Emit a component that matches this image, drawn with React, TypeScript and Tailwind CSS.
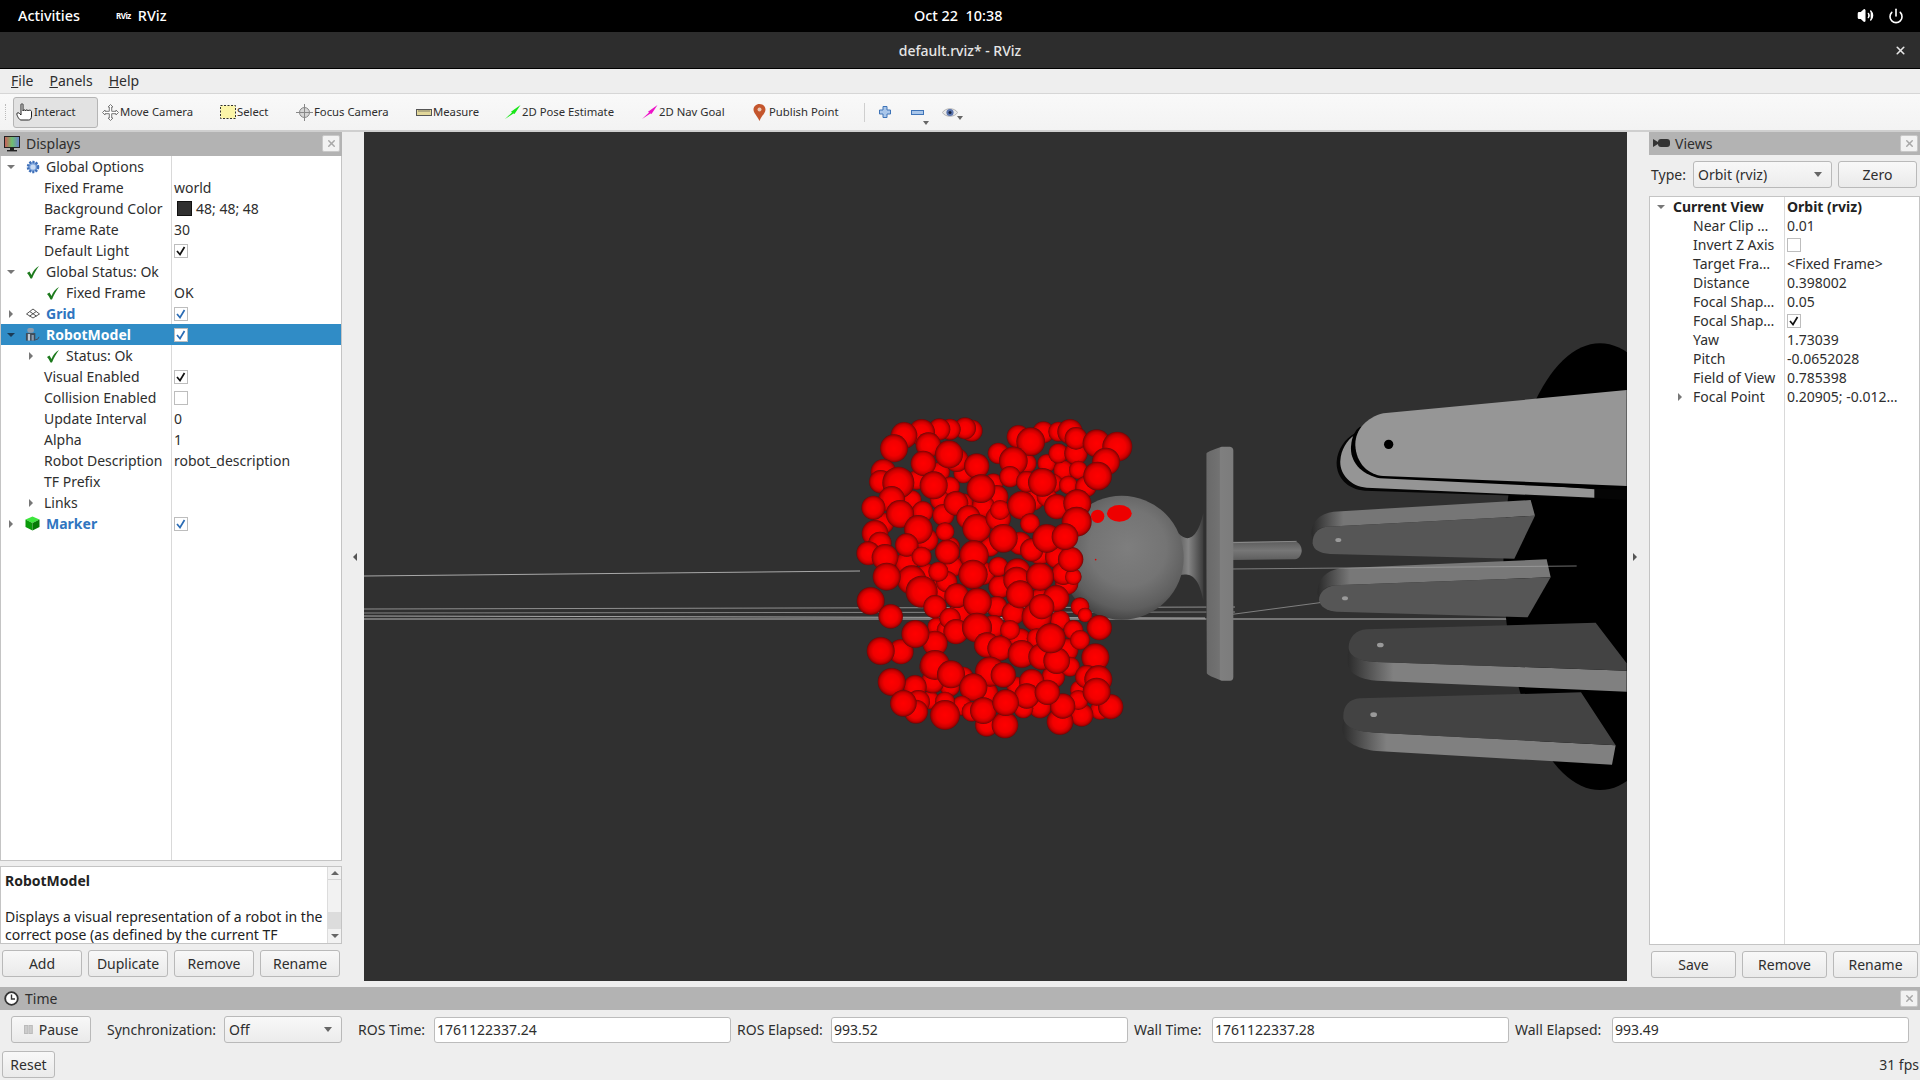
import React from "react";
import { Volume2, Power, X } from "lucide-react";

const S: [number, number, number][] = [
[230,240,30],[300,215,30],[370,220,30],[330,260,30],[460,250,30],[470,290,35],[370,310,30],[430,320,35],[330,440,30],[300,300,30],[260,420,35],[130,370,32],[215,300,30],[560,190,30],[620,190,28],[670,210,30],[640,250,28],[580,300,32],[620,290,30],[540,430,35],[600,460,35],[650,470,35],[450,440,30],[430,520,35],[480,560,35],[380,490,30],[340,500,30],[260,520,30],[200,490,35],[300,570,35],[360,640,35],[470,620,32],[520,640,35],[540,720,35],[600,600,35],[680,550,35],[670,520,35],[700,530,25],[460,680,35],[510,690,30],[290,680,28],[320,690,30],[660,660,30],[700,690,30],[680,750,35],[640,830,35],[690,800,30],[330,860,30],[370,830,30],[440,880,35],[530,860,30],[600,920,35],[720,870,30],[550,925,30],[270,900,28],
[395,92,33],[375,85,33],[330,88,32],[298,88,33],[245,97,40],[192,106,40],[265,135,38],[250,190,38],[350,180,36],[162,145,42],[327,163,42],[410,198,38],[130,215,38],[122,245,35],[175,248,48],[281,256,42],[423,266,43],[155,298,40],[100,323,36],[248,335,32],[310,345,33],[180,342,42],[315,395,28],[348,310,37],[385,352,36],[235,388,43],[410,385,43],[105,400,40],[120,430,35],[85,460,36],[200,435,35],[135,472,40],[245,470,30],[322,456,37],[402,465,44],[475,355,38],[480,330,30],[490,415,43],[545,316,43],
[475,160,32],[535,110,35],[610,97,33],[572,125,43],[520,183,43],[655,95,30],[690,95,38],[655,160,30],[708,160,35],[708,115,34],[770,130,42],[832,140,45],[715,210,28],[685,255,28],[738,260,32],[798,185,42],[773,228,43],[510,230,32],[560,245,32],[607,247,43],
[570,370,30],[575,450,35],[692,478,38],[650,320,38],[712,310,42],[710,365,45],[620,415,43],[675,410,40],[475,500,30],[320,545,32],[295,515,30],[532,515,40],[530,540,40],[600,530,42],[399,523,44],[215,540,44],[140,530,42],[245,575,48],[285,620,35],[350,587,37],[412,607,43],[330,655,32],[348,695,38],[411,683,45],[590,650,45],[540,583,42],[648,595,40],[605,620,38],
[92,603,42],[152,649,37],[183,755,38],[285,730,38],[226,702,42],[122,753,42],[720,620,28],[735,645,22],[590,715,30],[720,720,30],[778,683,38],[440,735,38],[480,745,38],[545,762,42],[605,770,40],[650,782,40],[632,715,45],[766,772,42],
[270,800,32],[278,845,35],[285,795,45],[333,823,42],[225,860,35],[155,846,42],[575,845,38],[450,815,45],[490,825,38],[400,862,42],[740,830,35],[775,838,42],[780,930,30],[812,920,38],[725,945,35],[715,900,30],[660,965,40],[668,918,38],[560,888,38],[622,877,38],[770,875,42],[440,975,35],[495,975,40],[365,917,30],[395,935,30],[430,932,40],[497,908,40],[315,905,30],[315,945,45],[235,905,35],[228,935,36],[190,910,40],
];

function Scene() {
  return (
    <svg viewBox="364 132 1263 849" className="w-full h-full block">
      <defs>
        <radialGradient id="red" cx="50%" cy="50%" r="50%">
          <stop offset="0%" stopColor="#ff0000" />
          <stop offset="55%" stopColor="#f20000" />
          <stop offset="80%" stopColor="#cc0000" />
          <stop offset="93%" stopColor="#9c0000" />
          <stop offset="100%" stopColor="#5c0c0c" />
        </radialGradient>
        <radialGradient id="ball" cx="55%" cy="42%" r="62%">
          <stop offset="0%" stopColor="#7e7e7e" />
          <stop offset="50%" stopColor="#747474" />
          <stop offset="80%" stopColor="#5e5e5e" />
          <stop offset="100%" stopColor="#3c3c3c" />
        </radialGradient>
        <linearGradient id="flange" x1="0" x2="1" y1="0" y2="0">
          <stop offset="0%" stopColor="#2a2a2a" />
          <stop offset="7%" stopColor="#6a6a6a" />
          <stop offset="50%" stopColor="#727272" />
          <stop offset="54%" stopColor="#7f7f7f" />
          <stop offset="100%" stopColor="#7c7c7c" />
        </linearGradient>
        <linearGradient id="neck" x1="0" x2="1" y1="0" y2="0">
          <stop offset="0%" stopColor="#5e5e5e" />
          <stop offset="40%" stopColor="#858585" />
          <stop offset="100%" stopColor="#3c3c3c" />
        </linearGradient>
        <linearGradient id="shaft" x1="0" x2="0" y1="0" y2="1">
          <stop offset="0%" stopColor="#5c5c5c" />
          <stop offset="50%" stopColor="#777777" />
          <stop offset="100%" stopColor="#5e5e5e" />
        </linearGradient>
        <linearGradient id="side" gradientUnits="userSpaceOnUse" x1="395" x2="490" y1="0" y2="0">
          <stop offset="0%" stopColor="#2a2a2a" />
          <stop offset="100%" stopColor="#767676" />
        </linearGradient>
        <linearGradient id="side2" gradientUnits="userSpaceOnUse" x1="412" x2="510" y1="0" y2="0">
          <stop offset="0%" stopColor="#2a2a2a" />
          <stop offset="100%" stopColor="#787878" />
        </linearGradient>
        <linearGradient id="side3" gradientUnits="userSpaceOnUse" x1="503" x2="640" y1="0" y2="0">
          <stop offset="0%" stopColor="#2c2c2c" />
          <stop offset="100%" stopColor="#808080" />
        </linearGradient>
        <linearGradient id="side4" gradientUnits="userSpaceOnUse" x1="487" x2="620" y1="0" y2="0">
          <stop offset="0%" stopColor="#2c2c2c" />
          <stop offset="100%" stopColor="#808080" />
        </linearGradient>
      </defs>
      <g stroke="#a8a8a8" strokeWidth="1" fill="none">
        <path d="M364 576 L860 571" />
        <path d="M364 609 L1235 607" strokeOpacity=".8" />
        <path d="M364 613 L1235 612" strokeOpacity=".7" />
        <path d="M364 616 L1205 618" />
        <path d="M364 619 L1235 619" stroke="#b8b8b8" />
        <path d="M1235 619 L1510 619" stroke="#b8b8b8" />
      </g>
      <g transform="translate(1180 330) scale(0.33333)">
        <ellipse cx="1260" cy="710" rx="290" ry="670" fill="#000" />
        <path d="M1245 505 L555 482 C500 478 468 440 470 395 C472 360 495 325 525 310 L1340 300 L1340 510 Z" fill="#050505" />
        <path d="M1243 503 L560 473 C510 470 478 430 481 392 C483 360 500 330 525 315 L600 430 L1243 478 Z" fill="#959595" />
        <path d="M1340 480 L600 445 C550 435 510 400 513 350 C515 320 525 300 540 290 L1340 300Z" fill="#000" />
        <path d="M1340 180 L610 250 C560 262 525 300 526 345 C528 400 565 435 610 438 L1340 468 Z" fill="#969696" />
        <circle cx="626" cy="343" r="14" fill="#000" />
        <path d="M1052 510 L460 545 C420 550 395 575 394 610 L398 632 C400 605 415 592 440 590 L1065 557 Z" fill="url(#side)" />
        <path d="M1065 557 L440 590 C410 595 397 615 398 640 C400 660 420 670 450 672 L1003 686 Z" fill="#565656" />
        <ellipse cx="475" cy="630" rx="9" ry="6" fill="#9a9a9a" />
        <path d="M1100 688 L480 715 C440 722 413 745 412 790 L417 808 C420 780 440 768 465 766 L1112 742 Z" fill="url(#side2)" />
        <path d="M1112 742 L465 766 C435 770 417 790 417 810 C420 830 440 843 470 845 L1043 862 Z" fill="#565656" />
        <ellipse cx="495" cy="805" rx="9" ry="6" fill="#9a9a9a" />
        <path d="M506 955 C503 970 502 990 504 1005 C510 1035 550 1050 590 1052 L1340 1085 L1340 1022 L590 996 C550 994 512 985 506 955Z" fill="url(#side3)" />
        <path d="M1247 878 L560 898 C525 900 505 925 506 955 C510 985 550 995 590 996 L1340 1022 L1340 1000 Z" fill="#434343" />
        <ellipse cx="601" cy="945" rx="10" ry="7" fill="#9a9a9a" />
        <path d="M490 1165 L487 1200 C492 1240 540 1258 590 1263 L1296 1304 L1307 1246 L590 1208 C540 1206 495 1195 490 1165Z" fill="url(#side4)" />
        <path d="M1203 1087 L540 1105 C505 1108 488 1130 490 1165 C495 1195 540 1208 590 1208 L1307 1246 Z" fill="#434343" />
        <ellipse cx="581" cy="1154" rx="10" ry="7" fill="#9a9a9a" />
        <path d="M157 635 L345 633 C360 640 366 650 365 665 C362 680 355 688 340 688 L157 690 Z" fill="url(#shaft)" />
        <path d="M157 638 L350 634" stroke="#a0a0a0" strokeWidth="2" fill="none" />
        <path d="M157 717 L1190 708" stroke="#a8a8a8" strokeWidth="2" fill="none" />
        <path d="M157 853 L420 818" stroke="#a8a8a8" strokeWidth="2" fill="none" />
        <path d="M76 372 Q80 365 125 350 L150 350 Q160 352 160 362 L160 1040 Q160 1052 150 1052 L125 1052 Q85 1038 80 1030 Z" fill="url(#flange)" />
      </g>
      <g transform="translate(840 400) scale(0.33333)">
        <path d="M1015 400 C1040 425 1070 425 1090 340 L1090 600 C1075 525 1050 520 1020 525Z" fill="url(#neck)" />
        <circle cx="845" cy="473" r="186" fill="url(#ball)" />
        <ellipse cx="773" cy="349" rx="20" ry="20" fill="#ee0000" />
        <ellipse cx="838" cy="340" rx="37" ry="25" fill="#ee0000" />
        <circle cx="767" cy="479" r="2.5" fill="#e00000" />
        {S.map(([x, y, r], i) => (
          <circle key={i} cx={x} cy={y} r={r} fill="url(#red)" />
        ))}
      </g>
    </svg>
  );
}

const Arrow = ({ open, light }: { open?: boolean; light?: boolean }) => (
  <svg width="12" height="12" viewBox="0 0 12 12" className="shrink-0">
    {open ? (
      <path d="M2 4 L10 4 L6 8 Z" fill={light ? "#1b3a55" : "#777"} />
    ) : (
      <path d="M4 2 L8 6 L4 10 Z" fill="#777" />
    )}
  </svg>
);

const OkIcon = () => (
  <svg width="14" height="14" viewBox="0 0 14 14">
    <path d="M1 8 L3.5 6.5 L5.5 10 C7 6 10 2.5 13 1 C10 5 8 8.5 6 13.5 L4.5 13.5 C3.5 11.5 2.5 9.5 1 8 Z" fill="#1d7a1d" />
  </svg>
);
const GearIcon = () => (
  <svg width="14" height="14" viewBox="0 0 14 14">
    <circle cx="7" cy="7" r="5" fill="#7fa6dd" stroke="#3e6fb8" strokeWidth="2.6" strokeDasharray="2 1.2" />
    <circle cx="7" cy="7" r="2.6" fill="#c9dbf3" />
  </svg>
);
const GridIcon = () => (
  <svg width="14" height="14" viewBox="0 0 14 14" fill="none" stroke="#555" strokeWidth="1">
    <path d="M7 2 L13.5 7 L7 11 L.5 7 Z" />
    <path d="M4 4.7 L10.5 9.2 M10 4.7 L3.5 9.2" />
  </svg>
);
const RobotIcon = () => (
  <svg width="16" height="15" viewBox="0 0 16 15">
    <rect x="2.5" y="0.5" width="7" height="5" rx="2" fill="#8d9cad" />
    <rect x="1" y="6" width="10" height="8" fill="#3f4b58" />
    <rect x="3" y="7" width="2.4" height="7" fill="#c2ccd6" />
    <rect x="7" y="8" width="2.4" height="6" fill="#8a9bb0" />
    <path d="M11 13 Q14 13.5 15 10" stroke="#445" fill="none" />
  </svg>
);
const CubeIcon = () => (
  <svg width="15" height="15" viewBox="0 0 15 15">
    <path d="M7.5 0.5 L14.5 3.5 L7.5 7 L.5 3.5 Z" fill="#3ee63e" />
    <path d="M.5 3.5 L7.5 7 L7.5 14.5 L.5 11 Z" fill="#0a9a0a" />
    <path d="M14.5 3.5 L7.5 7 L7.5 14.5 L14.5 11 Z" fill="#067a06" />
  </svg>
);
const Box = ({ mark }: { mark?: "black" | "blue" }) => (
  <div className="w-[14px] h-[14px] bg-white border border-[#bdbdbd] flex items-center justify-center shrink-0">
    {mark && (
      <svg width="10" height="10" viewBox="0 0 10 10" fill="none" stroke={mark === "blue" ? "#2b6cb5" : "#111"} strokeWidth="1.7">
        <path d="M1 5 L4 8.5 L8.5 1" />
      </svg>
    )}
  </div>
);

type Row = {
  label: string; level?: number; arrow?: "open" | "closed"; icon?: React.ReactNode; value?: string;
  check?: "black" | "blue" | "none"; blue?: boolean; sel?: boolean; swatch?: boolean;
};
const displayRows: Row[] = [
  { label: "Global Options", arrow: "open", icon: <GearIcon /> },
  { label: "Fixed Frame", level: 1, value: "world" },
  { label: "Background Color", level: 1, value: "48; 48; 48", swatch: true },
  { label: "Frame Rate", level: 1, value: "30" },
  { label: "Default Light", level: 1, check: "black" },
  { label: "Global Status: Ok", arrow: "open", icon: <OkIcon /> },
  { label: "Fixed Frame", level: 1, icon: <OkIcon />, value: "OK" },
  { label: "Grid", arrow: "closed", icon: <GridIcon />, check: "blue", blue: true },
  { label: "RobotModel", arrow: "open", icon: <RobotIcon />, check: "blue", blue: true, sel: true },
  { label: "Status: Ok", level: 1, arrow: "closed", icon: <OkIcon /> },
  { label: "Visual Enabled", level: 1, check: "black" },
  { label: "Collision Enabled", level: 1, check: "none" },
  { label: "Update Interval", level: 1, value: "0" },
  { label: "Alpha", level: 1, value: "1" },
  { label: "Robot Description", level: 1, value: "robot_description" },
  { label: "TF Prefix", level: 1 },
  { label: "Links", level: 1, arrow: "closed" },
  { label: "Marker", arrow: "closed", icon: <CubeIcon />, check: "blue", blue: true },
];

function DisplayRow({ r }: { r: Row }) {
  const lvl = r.level ?? 0;
  return (
    <div className={"flex h-[21px] items-center " + (r.sel ? "bg-[#308cc6]" : "")}>
      <div className={"w-[170px] shrink-0 flex items-center h-full whitespace-nowrap " + (lvl ? "pl-[24px]" : "pl-[4px]")}>
        <div className="w-[12px] shrink-0 flex justify-center">
          {r.arrow && <Arrow open={r.arrow === "open"} light={r.sel} />}
        </div>
        {r.icon ? (
          <div className="w-[15px] ml-[8px] mr-[6px] shrink-0 flex justify-center">{r.icon}</div>
        ) : (
          <div className="w-[7px] shrink-0" />
        )}
        <span className={r.sel ? "text-white font-bold" : r.blue ? "text-[#2f75c0] font-bold" : "text-[#2e2e2e]"}>
          {r.label}
        </span>
      </div>
      <div className={"flex-1 flex items-center h-full pl-[2px] border-l " + (r.sel ? "border-transparent" : "border-[#d9d9d9]")}>
        {r.check ? <Box mark={r.check === "none" ? undefined : r.check} /> : null}
        {r.swatch && <div className="w-[15px] h-[15px] bg-[#303030] border border-[#111] ml-[3px] mr-[4px]" />}
        {r.value && <span className="text-[#2e2e2e] whitespace-nowrap">{r.value}</span>}
      </div>
    </div>
  );
}

const viewRows: { label: string; value?: string; check?: "black" | "none"; arrow?: boolean }[] = [
  { label: "Near Clip …", value: "0.01" },
  { label: "Invert Z Axis", check: "none" },
  { label: "Target Fra…", value: "<Fixed Frame>" },
  { label: "Distance", value: "0.398002" },
  { label: "Focal Shap…", value: "0.05" },
  { label: "Focal Shap…", check: "black" },
  { label: "Yaw", value: "1.73039" },
  { label: "Pitch", value: "-0.0652028" },
  { label: "Field of View", value: "0.785398" },
  { label: "Focal Point", value: "0.20905; -0.012…", arrow: true },
];

const Btn = ({ children, className = "" }: { children: React.ReactNode; className?: string }) => (
  <div className={"h-[27px] border border-[#b9b9b9] rounded-[3px] bg-gradient-to-b from-[#f8f8f8] to-[#eaeaea] flex items-center justify-center text-[#2e2e2e] " + className}>
    {children}
  </div>
);
const CloseBtn = () => (
  <div className="w-[18px] h-[17px] bg-[#f2f2f2] border border-[#c8c8c8] rounded-[2px] flex items-center justify-center">
    <X size={11} strokeWidth={3.2} className="text-[#a8a8a8]" />
  </div>
);
const Combo = ({ text, className = "" }: { text: string; className?: string }) => (
  <div className={"h-[27px] border border-[#b9b9b9] rounded-[3px] bg-gradient-to-b from-[#f8f8f8] to-[#ececec] flex items-center justify-between pl-[4px] pr-[9px] text-[#2e2e2e] " + className}>
    <span>{text}</span>
    <svg width="8" height="5" viewBox="0 0 8 5"><path d="M0 0 H8 L4 5 Z" fill="#666" /></svg>
  </div>
);
const Field = ({ label, value, labelW }: { label: string; value: string; labelW: string }) => (
  <div className="flex items-center">
    <span className={"whitespace-nowrap text-[#2e2e2e] " + labelW}>{label}</span>
    <div className="h-[26px] w-[297px] bg-white border border-[#bcbcbc] rounded-[3px] flex items-center pl-[2px] text-[#2e2e2e]">{value}</div>
  </div>
);

const tools: { w: string; label: string; icon: React.ReactNode }[] = [
  { w: "w-[117px]", label: "Move Camera", icon: (
    <svg width="17" height="17" viewBox="0 0 17 17" fill="#fff" stroke="#777" strokeWidth="1"><path d="M8.5 .5 L11 3 H9.7 V7.3 H14 V6 L16.5 8.5 L14 11 V9.7 H9.7 V14 H11 L8.5 16.5 L6 14 H7.3 V9.7 H3 V11 L.5 8.5 L3 6 V7.3 H7.3 V3 H6 Z" /></svg>
  ) },
  { w: "w-[77px]", label: "Select", icon: (
    <svg width="16" height="14" viewBox="0 0 16 14"><rect x=".5" y=".5" width="15" height="13" fill="#fbf5a8" stroke="#333" strokeDasharray="2 1.5" /></svg>
  ) },
  { w: "w-[119px]", label: "Focus Camera", icon: (
    <svg width="17" height="17" viewBox="0 0 17 17" fill="none" stroke="#888"><path d="M8.5 0 V17 M0 8.5 H17" /><circle cx="8.5" cy="8.5" r="5" fill="#d5d5d5" /><path d="M8.5 3 V14 M3 8.5 H14" /></svg>
  ) },
  { w: "w-[89px]", label: "Measure", icon: (
    <svg width="16" height="7" viewBox="0 0 16 7"><rect x=".5" y=".5" width="15" height="6" fill="#e2d79a" stroke="#555" /><path d="M3 1 V3 M5 1 V3 M7 1 V3 M9 1 V3 M11 1 V3 M13 1 V3" stroke="#555" strokeWidth=".7" /></svg>
  ) },
  { w: "w-[137px]", label: "2D Pose Estimate", icon: (
    <svg width="16" height="14" viewBox="0 0 16 14"><path d="M0 14 L7 7.5 L6 6.8 L15.5 0 L9.5 9 L8.5 8.5 Z" fill="#19e619" /></svg>
  ) },
  { w: "w-[112px]", label: "2D Nav Goal", icon: (
    <svg width="16" height="14" viewBox="0 0 16 14"><path d="M0 14 L7 7.5 L6 6.8 L15.5 0 L9.5 9 L8.5 8.5 Z" fill="#ee12c8" /></svg>
  ) },
];

export default function App() {
  return (
    <div className="w-[1920px] h-[1080px] overflow-hidden bg-[#eeeeee] flex flex-col text-[14px] font-['Noto_Sans',sans-serif] text-[#2e2e2e]">
      <div className="relative h-[32px] bg-black shrink-0 flex items-center text-white font-medium text-[14.4px] pb-[1px]">
        <span className="ml-[18px]">Activities</span>
        <span className="ml-[36px] text-[8px] font-bold tracking-[-0.5px]">RViz</span>
        <span className="ml-[7px]">RViz</span>
        <span className="absolute left-[914px]">Oct 22&nbsp;&nbsp;10:38</span>
        <div className="ml-auto flex items-center gap-[14px] mr-[16px]">
          <Volume2 size={17} fill="#fff" />
          <Power size={16} strokeWidth={2.4} />
        </div>
      </div>
      <div className="relative h-[37px] bg-[#2d2d2d] border-b border-black shrink-0 flex items-center justify-center text-[#e6e6e6] font-medium">
        default.rviz* - RViz
        <X size={13} strokeWidth={3} className="absolute right-[13px] top-[12px] text-[#e6e6e6]" />
      </div>
      <div className="h-[25px] shrink-0 flex items-center bg-[#eeeeee] pl-[11px] gap-[16px] border-b border-[#d6d6d6] pb-[1px]">
        <span><span className="underline">F</span>ile</span>
        <span><span className="underline">P</span>anels</span>
        <span><span className="underline">H</span>elp</span>
      </div>
      <div className="h-[38px] shrink-0 flex items-center bg-gradient-to-b from-[#f9f9f9] to-[#f3f3f3] border-b-2 border-[#cfcfcf] text-[11.3px] pl-[5px]">
        <div className="w-[3px] h-[16px] border-l border-dotted border-[#bbb] mr-[5px]" />
        <div className="w-[85px] h-[31px] bg-[#e2e2e2] border border-[#b5b5b5] rounded-[3px] flex items-center pl-[2px] mr-[4px]">
          <svg width="17" height="18" viewBox="0 0 17 18" fill="#fff" stroke="#222" strokeWidth="1"><path d="M5 1.5 C5 .6 7 .6 7 1.5 V8 C7 6.5 9.5 6.5 9.5 8 C9.5 6.5 12 6.5 12 8 C12 6.8 15.5 6.8 15.5 8.5 V13 C15.5 15.5 14.5 17 12.5 17 H5 C3 17 1 12.5 .8 11 C.6 9.5 3 9.5 3.5 10.5 L5 12 Z" /></svg>
          <span className="ml-[1px]">Interact</span>
        </div>
        {tools.map((t) => (
          <div key={t.label} className={"flex items-center whitespace-nowrap " + t.w}>
            <div className="w-[17px] flex justify-center shrink-0">{t.icon}</div>
            <span className="ml-[1px]">{t.label}</span>
          </div>
        ))}
        <div className="flex items-center w-[111px] whitespace-nowrap">
          <svg width="13" height="17" viewBox="0 0 13 17">
            <path d="M6.5 0 C10 0 12.5 2.5 12.5 5.7 C12.5 9 8.5 12 6.5 17 C4.5 12 .5 9 .5 5.7 C.5 2.5 3 0 6.5 0 Z" fill="#c4562d" />
            <circle cx="6.5" cy="5.5" r="2" fill="#e8c7b5" />
          </svg>
          <span className="ml-[3px]">Publish Point</span>
        </div>
        <div className="w-px h-[19px] bg-[#cfcfcf]" />
        <svg width="12" height="12" viewBox="0 0 12 12" className="ml-[14px]"><path d="M4 .5 H8 V4 H11.5 V8 H8 V11.5 H4 V8 H.5 V4 H4 Z" fill="#a9c6ea" stroke="#3f74b8" /></svg>
        <div className="relative ml-[20px]">
          <svg width="13" height="5" viewBox="0 0 13 5" className="block"><rect x=".5" y=".5" width="12" height="4" fill="#a9c6ea" stroke="#3f74b8" /></svg>
          <div className="absolute left-[12px] top-[11px] w-0 h-0 border-x-[3px] border-x-transparent border-t-[4px] border-t-[#666]" />
        </div>
        <div className="relative ml-[18px]">
          <svg width="16" height="11" viewBox="0 0 16 11" className="block"><path d="M.5 5.5 C3 .5 13 .5 15.5 5.5 C13 10.5 3 10.5 .5 5.5 Z" fill="#e8e8e8" stroke="#b5b5b5" /><circle cx="8" cy="5.5" r="3.6" fill="#5a74ad" /><circle cx="8" cy="5.5" r="1.5" fill="#17233f" /></svg>
          <div className="absolute left-[15px] top-[9px] w-0 h-0 border-x-[3px] border-x-transparent border-t-[4px] border-t-[#666]" />
        </div>
      </div>

      <div className="h-[849px] shrink-0 flex">
        <div className="w-[342px] shrink-0 flex flex-col">
          <div className="h-[24px] bg-[#b3b3b3] flex items-center pl-[4px] pr-[2px] pb-[1px] shrink-0">
            <svg width="16" height="16" viewBox="0 0 16 16" className="mr-[6px]"><defs><linearGradient id="scr" x1="0" x2="1"><stop offset="0%" stopColor="#d05a5a" /><stop offset="50%" stopColor="#6fbf6f" /><stop offset="100%" stopColor="#6a7fd0" /></linearGradient></defs><rect x=".5" y=".5" width="15" height="11" fill="url(#scr)" stroke="#222" /><rect x="6" y="12" width="4" height="2" fill="#222" /><rect x="3" y="14" width="10" height="1.4" fill="#222" /></svg>
            <span>Displays</span>
            <div className="ml-auto"><CloseBtn /></div>
          </div>
          <div className="h-[705px] shrink-0 bg-white border border-t-0 border-[#c4c4c4] relative">
            {displayRows.map((r, i) => <DisplayRow key={i} r={r} />)}
            <div className="absolute left-[170px] top-[378px] bottom-0 w-px bg-[#d9d9d9]" />
          </div>
          <div className="h-[5px] shrink-0" />
          <div className="h-[78px] shrink-0 bg-white border border-[#c4c4c4] flex overflow-hidden">
            <div className="flex-1 pl-[4px] pt-[5px] leading-[18px] text-[#222] whitespace-nowrap">
              <div className="font-bold">RobotModel</div>
              <div className="h-[18px]" />
              <div>Displays a visual representation of a robot in the</div>
              <div>correct pose (as defined by the current TF</div>
            </div>
            <div className="w-[14px] bg-[#f2f2f2] border-l border-[#dcdcdc] flex flex-col">
              <div className="h-[13px] flex items-center justify-center border-b border-[#d5d5d5]"><div className="w-0 h-0 border-x-[4px] border-x-transparent border-b-[4px] border-b-[#666]" /></div>
              <div className="h-[32px]" />
              <div className="h-[17px] bg-[#dcdcdc]" />
              <div className="flex-1 flex items-center justify-center"><div className="w-0 h-0 border-x-[4px] border-x-transparent border-t-[4px] border-t-[#666]" /></div>
            </div>
          </div>
          <div className="flex gap-[6px] px-[2px] pt-[6px]">
            {["Add", "Duplicate", "Remove", "Rename"].map((b) => <Btn key={b} className="w-[80px]">{b}</Btn>)}
          </div>
        </div>
        <div className="w-[22px] shrink-0 flex items-center justify-center pl-[3px]">
          <div className="w-0 h-0 border-y-[4px] border-y-transparent border-r-[4px] border-r-[#555]" />
        </div>
        <div className="w-[1263px] shrink-0 bg-[#303030] overflow-hidden"><Scene /></div>
        <div className="w-[22px] shrink-0 flex items-center justify-center pr-[6px]">
          <div className="w-0 h-0 border-y-[4px] border-y-transparent border-l-[4px] border-l-[#555]" />
        </div>
        <div className="w-[271px] shrink-0 flex flex-col">
          <div className="h-[23px] bg-[#b3b3b3] flex items-center pl-[4px] pr-[2px] pb-[1px] shrink-0">
            <svg width="17" height="10" viewBox="0 0 17 10" className="mr-[5px]"><path d="M0 1 L5 4 V6 L0 9 Z" fill="#333" /><rect x="5" y="1" width="12" height="8" rx="3" fill="#333" /></svg>
            <span>Views</span>
            <div className="ml-auto"><CloseBtn /></div>
          </div>
          <div className="flex items-center h-[27px] mt-[6px] shrink-0 pl-[2px]">
            <span className="w-[42px]">Type:</span>
            <Combo text="Orbit (rviz)" className="w-[139px]" />
            <Btn className="w-[79px] ml-[6px]">Zero</Btn>
          </div>
          <div className="h-[749px] mt-[8px] shrink-0 bg-white border border-[#c4c4c4] relative">
            <div className="flex h-[19px] items-center font-bold text-[#222]">
              <div className="w-[134px] shrink-0 flex items-center pl-[5px]">
                <Arrow open />
                <span className="ml-[6px]">Current View</span>
              </div>
              <span className="pl-[3px]">Orbit (rviz)</span>
            </div>
            {viewRows.map((r, i) => (
              <div key={i} className="flex h-[19px] items-center whitespace-nowrap">
                <div className="w-[134px] shrink-0 flex items-center pl-[24px]">
                  <div className="w-[12px] shrink-0">{r.arrow && <Arrow />}</div>
                  <span className="ml-[7px]">{r.label}</span>
                </div>
                <div className="pl-[3px] flex items-center">
                  {r.check ? <Box mark={r.check === "none" ? undefined : "black"} /> : r.value}
                </div>
              </div>
            ))}
            <div className="absolute left-[134px] top-0 bottom-0 w-px bg-[#d9d9d9]" />
          </div>
          <div className="flex gap-[6px] pl-[2px] pt-[6px]">
            {["Save", "Remove", "Rename"].map((b) => <Btn key={b} className="w-[85px]">{b}</Btn>)}
          </div>
        </div>
      </div>

      <div className="h-[6px] shrink-0" />
      <div className="h-[23px] bg-[#b3b3b3] flex items-center pl-[4px] pr-[2px] shrink-0">
        <svg width="15" height="15" viewBox="0 0 15 15" className="mr-[6px]"><circle cx="7.5" cy="7.5" r="6.3" fill="#fff" stroke="#333" strokeWidth="1.8" /><path d="M7.5 3.5 V8 H11" fill="none" stroke="#333" strokeWidth="1.4" /></svg>
        <span>Time</span>
        <div className="ml-auto"><CloseBtn /></div>
      </div>
      <div className="flex items-center h-[27px] mt-[6px] shrink-0 pl-[11px]">
        <Btn className="w-[80px]">
          <svg width="9" height="9" viewBox="0 0 9 9" className="mr-[6px]"><rect x=".5" y=".5" width="3.3" height="8" fill="#ccc" stroke="#bbb" /><rect x="5" y=".5" width="3.3" height="8" fill="#ccc" stroke="#bbb" /></svg>
          Pause
        </Btn>
        <span className="ml-[16px] w-[117px] whitespace-nowrap">Synchronization:</span>
        <Combo text="Off" className="w-[118px]" />
        <div className="ml-[16px]"><Field label="ROS Time:" value="1761122337.24" labelW="w-[76px]" /></div>
        <div className="ml-[6px]"><Field label="ROS Elapsed:" value="993.52" labelW="w-[94px]" /></div>
        <div className="ml-[6px]"><Field label="Wall Time:" value="1761122337.28" labelW="w-[78px]" /></div>
        <div className="ml-[6px]"><Field label="Wall Elapsed:" value="993.49" labelW="w-[97px]" /></div>
      </div>
      <div className="flex items-center mt-[8px] h-[26px] pl-[2px] pr-[1px]">
        <Btn className="w-[53px] h-[26px]">Reset</Btn>
        <span className="ml-auto">31 fps</span>
      </div>
    </div>
  );
}
